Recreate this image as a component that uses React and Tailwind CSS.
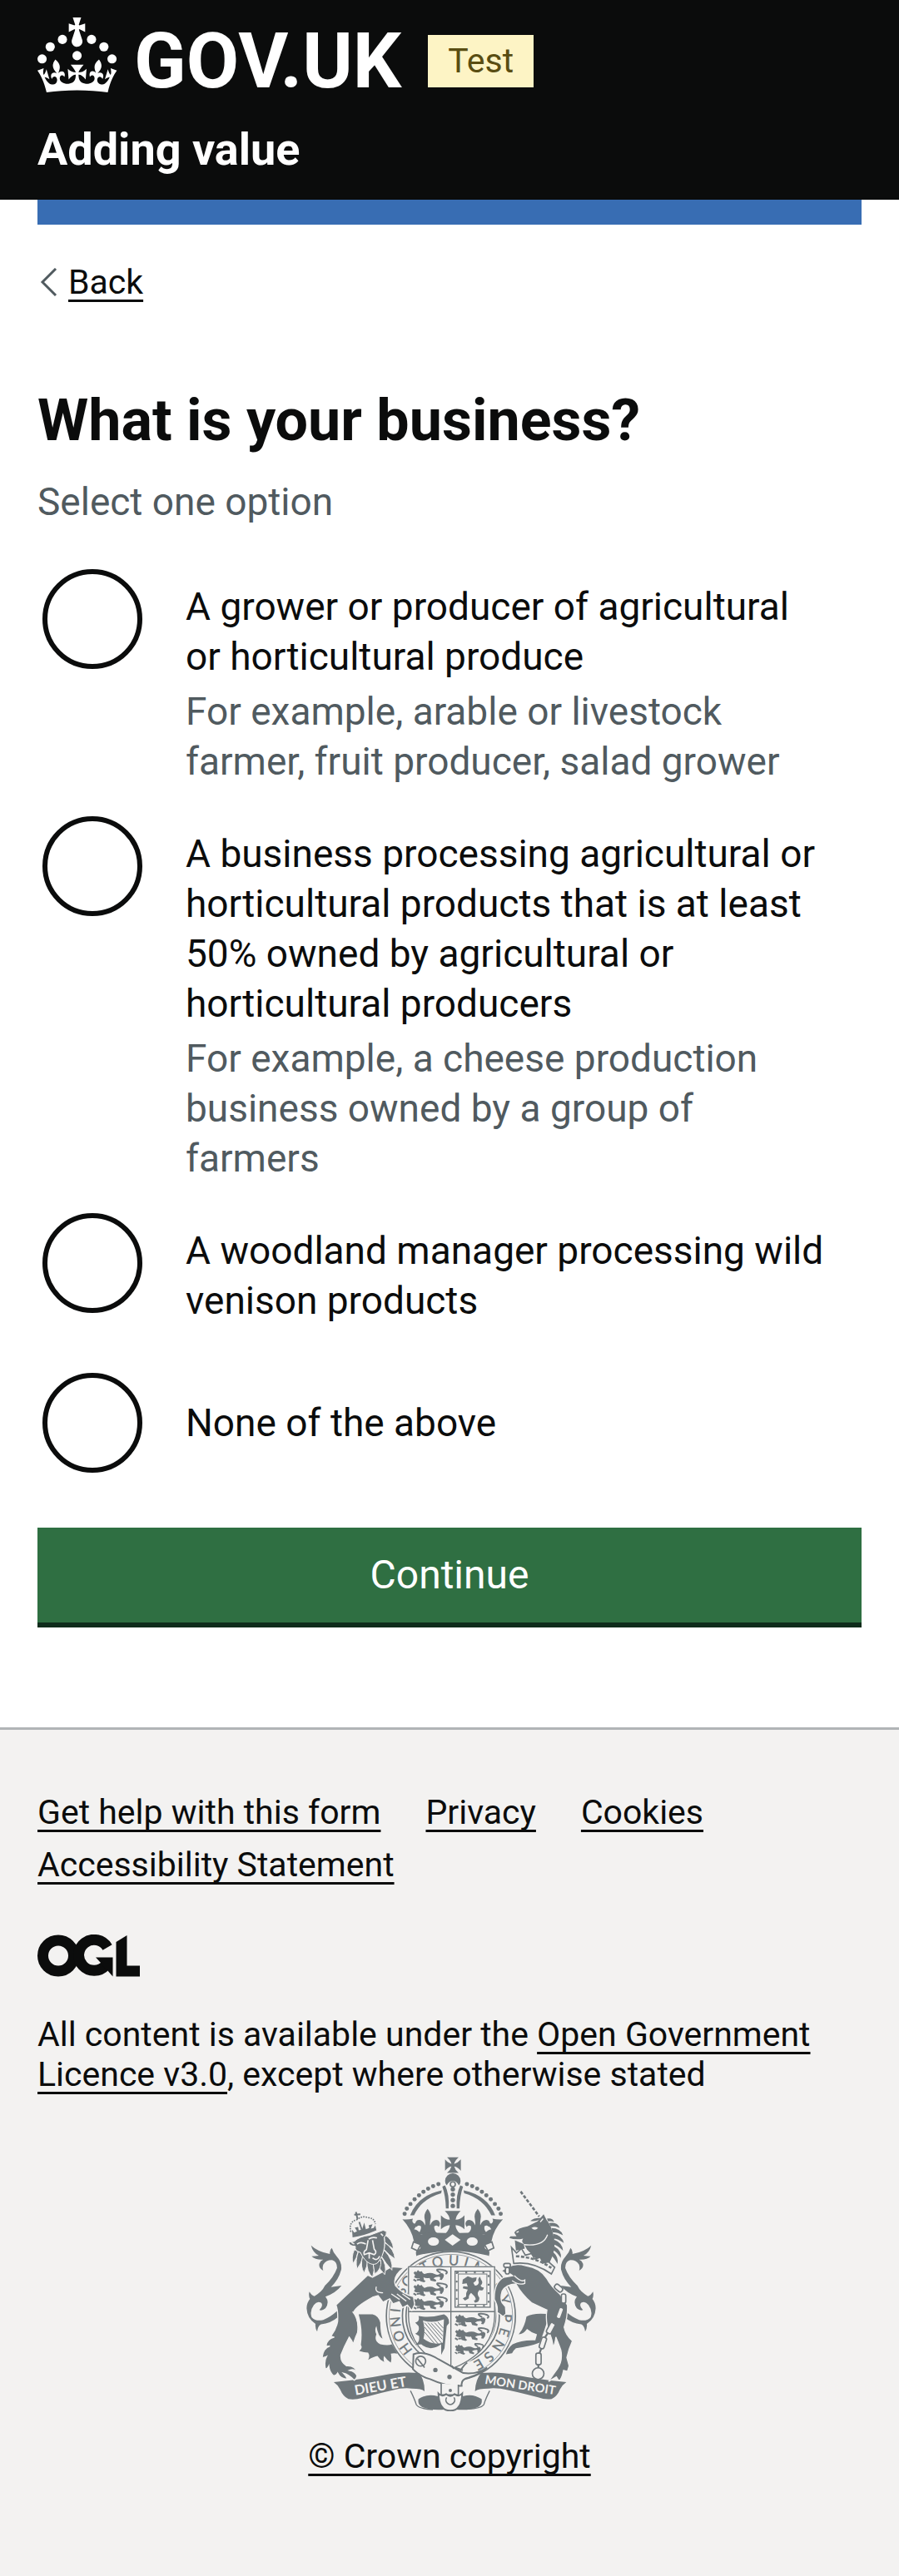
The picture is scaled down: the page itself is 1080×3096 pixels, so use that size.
const OPTIONS = [
  {
    id: "grower",
    label: "A grower or producer of agricultural or horticultural produce",
    hint: "For example, arable or livestock farmer, fruit producer, salad grower",
  },
  {
    id: "processor",
    label:
      "A business processing agricultural or horticultural products that is at least 50% owned by agricultural or horticultural producers",
    hint: "For example, a cheese production business owned by a group of farmers",
  },
  {
    id: "woodland",
    label: "A woodland manager processing wild venison products",
  },
  { id: "none", label: "None of the above" },
];

const FOOTER_LINKS = [
  "Get help with this form",
  "Privacy",
  "Cookies",
  "Accessibility Statement",
];

const LINK =
  "underline decoration-[3px] underline-offset-[7px] [text-decoration-skip-ink:none]";

function Crown() {
  return (
    <svg viewBox="0 0 64 60" className="h-[90px] w-24 shrink-0" fill="currentColor" aria-hidden="true">
      <circle cx="20" cy="17.6" r="3.7" />
      <circle cx="10.2" cy="23.5" r="3.7" />
      <circle cx="3.7" cy="33.2" r="3.7" />
      <circle cx="31.7" cy="30.6" r="3.7" />
      <circle cx="43.3" cy="17.6" r="3.7" />
      <circle cx="53.2" cy="23.5" r="3.7" />
      <circle cx="59.7" cy="33.2" r="3.7" />
      <path d="M33.1,9.8c.2-.1.3-.3.5-.5l4.6,2.4v-6.8l-4.6,1.5c-.1-.2-.3-.3-.5-.5l1.9-5.9h-6.7l1.9,5.9c-.2.1-.3.3-.5.5l-4.6-1.5v6.8l4.6-2.4c.1.2.3.3.5.5l-2.6,8c-.9,2.8,1.2,5.7,4.1,5.7h0c3,0,5.1-2.9,4.1-5.7l-2.6-8ZM37,37.9s-3.4,3.8-4.1,6.1c2.2,0,4.2-.5,6.4-2.8l-.7,8.5c-2-2.8-4.4-4.1-5.7-3.8.1,3.1.5,6.7,5.8,7.2,3.7.3,6.7-1.5,7-3.8.4-2.6-2-4.3-3.7-1.6-1.4-4.5,2.4-6.1,4.9-3.2-1.9-4.5-1.8-7.7,2.4-10.9,3,4,2.6,7.3-1.2,11.1,2.4-1.3,6.2,0,4,4.6-1.2-2.8-3.7-2.2-4.2.2-.3,1.7.7,3.7,3,4.2,1.9.3,4.7-.9,7-5.9-1.3,0-2.4.7-3.9,1.7l2.4-8c.6,2.3,1.4,3.7,2.2,4.5.6-1.6.5-2.8,0-5.3l5,1.8c-2.6,3.6-5.2,8.7-7.3,17.5-7.4-1.1-15.7-1.7-24.5-1.7h0c-8.8,0-17.1.6-24.5,1.7-2.1-8.9-4.7-13.9-7.3-17.5l5-1.8c-.5,2.5-.6,3.7,0,5.3.8-.8,1.6-2.3,2.2-4.5l2.4,8c-1.5-1-2.6-1.7-3.9-1.7,2.3,5,5.2,6.2,7,5.9,2.3-.4,3.3-2.4,3-4.2-.5-2.4-3-3.1-4.2-.2-2.2-4.6,1.6-6,4-4.6-3.7-3.7-4.2-7.1-1.2-11.1,4.2,3.2,4.3,6.4,2.4,10.9,2.5-2.8,6.3-1.3,4.9,3.2-1.8-2.7-4.1-1-3.7,1.6.3,2.3,3.3,4.1,7,3.8,5.4-.5,5.7-4.2,5.8-7.2-1.3-.2-3.7,1-5.7,3.8l-.7-8.5c2.2,2.3,4.2,2.7,6.4,2.8-.7-2.3-4.1-6.1-4.1-6.1h10.6,0Z" />
    </svg>
  );
}

/* Open Government Licence mark: two linked rings, an arrow and an angle. */
function LicenceMark() {
  return (
    <svg viewBox="0 0 123 51" className="h-[51px] w-[123px]" role="img" aria-label="Open Government Licence">
      <g fill="none" stroke="#0b0c0c" strokeWidth="13">
        <circle cx="25" cy="25.5" r="18.5" />
        <path d="M84 15.500A18.500 18.500 0 1 0 82 37" />
      </g>
      <path d="M70 27.500H90.500V50.500L84 43L77 37L76 34Z" fill="#0b0c0c" />
      <path d="M94.500 9L107.500 1V37.500H123V50.500H94.500Z" fill="#0b0c0c" />
    </svg>
  );
}

function PassantLion({ x, y, s = 1 }) {
  return (
    <g transform={`translate(${x} ${y}) scale(${s})`}>
      <path d="M2 10L8 4L12 8L18 0L24 6L32 4Q34 12 42 14Q64 6 78 14Q92 20 98 12Q108 8 112 18Q112 28 104 36L96 34Q102 26 94 24Q80 24 74 30L84 36L82 42L64 38L60 28Q46 30 38 26L40 36L46 40L40 44L26 40L24 30Q12 32 4 26L8 18Z" />
      <path
        d="M100 10Q84 2 88 -2Q104 -4 118 2Q128 8 118 14M14 36L30 34M2 34L12 40"
        fill="none"
        stroke="currentColor"
        strokeWidth="6"
      />
    </g>
  );
}

function Tail() {
  return (
    <path d="M40 385Q64 408 108 416Q106 402 115 394Q120 412 134 426Q152 445 149 472Q140 508 112 535L150 530Q130 556 92 570Q108 590 92 612Q80 622 70 618Q86 602 76 592Q62 584 50 600Q34 622 42 644Q56 660 84 654Q110 644 134 622L142 640Q110 668 76 670Q64 676 62 696Q54 684 56 668Q26 650 24 612Q24 592 36 578Q30 566 34 552Q42 566 52 568Q80 552 90 530Q122 500 134 466Q134 444 118 438Q96 436 84 454Q80 466 84 476Q66 466 70 450Q74 440 84 436Q56 438 42 424Q56 424 68 422Q46 410 40 385Z" />
  );
}

function Fleur({ x }) {
  return (
    <g transform={`translate(${x} 0)`}>
      <path d="M0 253Q16 272 10 292Q8 302 9 312Q20 288 38 294Q50 304 40 318Q34 308 24 316Q22 334 40 344L-38 344Q-22 334 -24 316Q-34 308 -40 318Q-50 304 -38 294Q-20 288 -9 312Q-8 302 -10 292Q-16 272 0 253Z" />
    </g>
  );
}

const ARCH_DOTS = [
  [378, 271],
  [386, 252],
  [399, 235],
  [414, 218],
  [430, 204],
  [446, 191],
  [463, 180],
  [481, 171],
  [500, 163],
];

/* Garter motto: each letter with its bearing round the ring, in degrees. */
const GARTER = [
  ["H", 234],
  ["O", 249],
  ["N", 264],
  ["I", 276],
  ["S", 297],
  ["O", 309],
  ["I", 320],
  ["T", 332],
  ["Q", 346],
  ["U", 3],
  ["I", 16],
  ["M", 31],
  ["A", 44],
  ["L", 57],
  ["Y", 73],
  ["P", 92],
  ["E", 107],
  ["N", 122],
  ["S", 137],
  ["E", 150],
];

const LION_MANE = [
  "M304 346Q334 360 338 398Q320 386 306 372Z",
  "M306 374Q342 400 343 434Q322 420 304 400Z",
  "M304 402Q338 436 332 474Q310 450 294 424Z",
  "M292 424Q316 456 306 490Q288 474 278 446Z",
  "M196 400Q184 430 192 450Q206 430 210 406Z",
  "M212 404Q198 440 206 470Q222 450 228 424Z",
  "M226 424Q216 462 232 484Q242 462 246 440Z",
  "M242 440Q240 480 262 500Q272 474 264 448Z",
  "M264 450L292 438Q296 470 270 488Z",
];

const UNICORN_MANE = [
  "M892 288Q912 284 918 300Q906 296 896 298Z",
  "M900 304Q930 298 938 322Q918 312 904 316Z",
  "M908 322Q940 322 950 348Q926 336 912 338Z",
  "M914 342Q946 348 953 376Q930 360 916 360Z",
  "M918 364Q948 376 950 404Q930 384 918 382Z",
  "M918 388Q946 404 942 430Q928 408 914 402Z",
  "M914 408Q936 428 930 452Q918 430 908 422Z",
];

function RoyalArms() {
  const bg = "#f3f2f1";
  return (
    <svg
      viewBox="12 64 1056 920"
      className="block h-[306px] w-[352px] text-[#6f777b]"
      fill="currentColor"
      aria-hidden="true"
    >
      {/* garter */}
      <g fill="none" stroke="currentColor" strokeWidth="5">
        <circle cx="545" cy="640" r="233" />
        <circle cx="545" cy="640" r="223" strokeWidth="2" />
        <circle cx="545" cy="640" r="175" />
        <circle cx="545" cy="640" r="162" />
      </g>
      <g fontFamily="Lato, sans-serif" fontSize="50" textAnchor="middle" stroke="currentColor" strokeWidth="1">
        {GARTER.map(([c, a]) => (
          <text key={a} x="545" y="456" transform={`rotate(${a} 545 640)`}>
            {c}
          </text>
        ))}
      </g>

      {/* crown */}
      <path d="M531 66H573Q558 80 557 90Q570 87 581 74V115Q570 101 557 99Q560 112 573 123H531Q544 112 547 99Q534 101 524 115V74Q534 87 547 90Q546 80 531 66Z" />
      <path d="M524 152A28 28 0 0 1 580 152Q580 162 574 168Q566 152 552 152Q538 152 530 168Q524 162 524 152Z" />
      <circle cx="552" cy="164" r="9" fill="none" stroke="currentColor" strokeWidth="5" />
      {[182, 201, 221, 242].map((y) => (
        <circle key={y} cx="552" cy={y} r="8" />
      ))}
      {["", "matrix(-1 0 0 1 1103 0)"].map((t) => (
        <g key={t} transform={t || undefined}>
          {ARCH_DOTS.map(([x, y]) => (
            <circle key={x} cx={x} cy={y} r="7.5" />
          ))}
          <path d="M398 276Q426 204 512 186L510 196Q440 216 412 276Z" />
          <path d="M514 172Q526 206 527 251H537Q540 200 524 168Z" />
          <path d="M370 290Q388 292 408 288Q402 300 412 306Q424 302 426 312Q418 316 412 326Q430 330 436 344L450 344V400Q436 402 421 424Q416 408 422 402Q440 398 438 384L412 372Q404 326 370 290Z" />
          <path d="M410 372L436 382L424 404L403 394Z" fill={bg} stroke="currentColor" strokeWidth="5" />
          <Fleur x={461} />
        </g>
      ))}
      <path d="M523 260H580Q564 276 562 292Q580 292 594 276V326Q580 312 562 311Q562 326 576 340L640 338Q668 340 680 370Q664 384 668 404L682 422Q551 388 421 422L434 404Q440 384 424 370Q436 340 462 338L527 340Q540 326 541 311Q524 312 509 326V276Q524 292 541 292Q540 276 523 260Z" />
      <g fill={bg}>
        <ellipse cx="482" cy="371" rx="20" ry="15" />
        <ellipse cx="622" cy="371" rx="20" ry="15" />
        <path d="M551 344L580 365L551 386L523 365Z" />
      </g>

      {/* shield */}
      <path
        d="M388 459H707V640Q704 776 545 838Q391 776 388 640Z"
        fill={bg}
      />
      <path
        d="M392 462H703V640Q700 772 545 832Q395 772 392 640ZM545 462V832M392 624H703"
        fill="none"
        stroke="currentColor"
        strokeWidth="4"
      />
      <PassantLion x={408} y={474} />
      <PassantLion x={408} y={524} />
      <PassantLion x={408} y={574} />
      <PassantLion x={558} y={634} />
      <PassantLion x={558} y={686} />
      <PassantLion x={558} y={742} s={0.85} />
      <g fill="none" stroke="currentColor">
        <rect x="560" y="478" width="127" height="130" strokeWidth="4" />
        <rect x="572" y="488" width="103" height="110" strokeWidth="3" />
        <rect x="566" y="483" width="115" height="120" strokeWidth="6" strokeDasharray="7 24" />
      </g>
      <path d="M588 508L606 496L622 502L638 500L636 512L626 520L632 530Q644 530 646 518Q640 506 650 498L654 508Q664 520 652 530Q658 540 664 536Q662 552 648 546Q636 560 648 574Q648 590 632 592L628 584Q640 582 630 568L618 556Q608 564 610 576L596 584L588 576L600 570Q598 556 606 544L588 540L590 532L606 534L602 522L586 524Z" />
      <path d="M428 640Q470 648 520 634Q540 644 538 666L530 676L522 756L510 780V742Q470 770 438 742L416 744Q434 734 430 712L416 704Q434 694 428 676L416 664Q434 660 428 640Z" />
      <path d="M444 656Q480 668 520 652L516 736Q480 748 446 722Q454 690 444 656Z" fill={bg} />
      <path
        d="M450 664L512 738M462 664L514 724M474 666L516 712M486 664L517 698M498 662L518 684M450 680L500 742M450 698L486 740"
        stroke="currentColor"
        strokeWidth="3"
      />

      {/* belt and buckle */}
      <path
        d="M410 778Q450 764 500 796Q546 822 590 846Q640 852 676 826Q650 850 610 862Q580 868 584 892Q530 896 470 868Q430 856 408 832Z"
        fill={bg}
        stroke="currentColor"
        strokeWidth="6"
      />
      <path d="M604 808Q590 818 578 840M560 826L588 836M556 830L548 820" fill="none" stroke="currentColor" strokeWidth="6" />
      <circle cx="436" cy="803" r="18" fill={bg} stroke="currentColor" strokeWidth="5" />
      <path d="M424 794L450 826" stroke="currentColor" strokeWidth="5" />
      <circle cx="489" cy="835" r="8" />
      <circle cx="540" cy="860" r="8" />

      {/* motto ribbons */}
      <path d="M122 879Q230 868 300 854Q370 840 430 846Q450 870 450 912Q440 902 404 902Q390 899 360 902Q296 916 224 936Q200 943 175 940Q155 930 145 905Q138 890 122 879Z" />
      <path d="M962 879Q854 868 784 854Q714 840 654 846Q634 870 632 912Q644 902 680 902Q694 899 724 902Q788 914 860 934Q884 943 909 940Q929 930 939 905Q946 890 962 879Z" />
      <g fill={bg} fontFamily="Lato, sans-serif" fontWeight="700">
        <text x="200" y="926" fontSize="50" transform="rotate(-10 200 926)">DIEU ET</text>
        <text x="666" y="884" fontSize="44" transform="rotate(9 666 884)">MON DROIT</text>
      </g>
      <path d="M428 940Q460 918 498 930Q506 960 522 978Q470 982 440 968Q424 958 428 940ZM656 940Q624 918 588 930Q580 960 564 978Q614 982 644 968Q660 958 656 940Z" />
      <path d="M399 910Q414 940 420 960Q430 976 480 978M685 910Q670 940 664 960Q654 974 604 976" fill="none" stroke="currentColor" strokeWidth="4" />
      <path d="M510 884V925H572V888" fill={bg} stroke="currentColor" strokeWidth="5" />
      <path d="M500 920Q512 934 528 922Q543 936 558 922Q574 934 586 920Q584 982 543 982Q502 982 500 920Z" fill={bg} stroke="currentColor" strokeWidth="6" />
      <path d="M530 934A16 16 0 1 0 556 934" fill="none" stroke="currentColor" strokeWidth="5" />
      <circle cx="543" cy="909" r="6" />

      {/* lion */}
      <Tail />
      <path d="M212 634H262Q284 640 290 664Q290 700 298 722Q282 714 276 676Q268 690 276 706Q266 730 290 742Q318 748 332 742L352 776Q340 772 328 776Q332 792 328 808Q314 800 304 784Q300 794 304 806Q288 798 280 784Q268 786 246 798Q254 784 246 772Q232 772 214 766Q228 756 220 744Q228 690 212 634Z" />
      <path
        d="M245 492L130 600Q138 620 136 660Q130 690 112 712Q116 716 124 716Q96 724 94 748Q100 750 108 748Q84 756 80 788Q84 792 96 786Q86 804 92 830Q98 832 104 820Q106 842 122 856Q132 854 136 846Q146 868 172 868Q166 856 156 846Q176 850 196 872Q204 868 206 856Q200 840 178 836Q196 828 206 844Q200 818 168 820Q145 805 148 780Q160 750 178 716Q190 730 192 742Q200 716 212 690Q210 650 194 626Q200 606 262 572L282 566L300 590L324 578L336 596L358 588L370 610L388 600L404 620L414 598L410 570Q370 560 345 530Q332 496 376 465L330 462Q300 480 262 500Z"
        stroke={bg}
        strokeWidth="4"
      />
      <path d="M276 534Q268 556 300 556M190 624Q214 650 208 700M330 560L360 580M350 560L384 586M370 560L398 580" fill="none" stroke={bg} strokeWidth="4" />
      {LION_MANE.map((d) => (
        <path key={d} d={d} stroke={bg} strokeWidth="3" />
      ))}
      <path
        d="M175 374L196 370Q214 352 252 348L300 330L312 334Q314 348 304 356Q310 390 296 424L282 446Q270 458 252 450Q232 440 218 410L204 404Q198 398 200 388Q180 388 175 374Z"
        stroke={bg}
        strokeWidth="3"
      />
      <path
        d="M206 380Q220 370 238 380M248 362Q262 352 278 358M246 366L240 400Q228 406 232 418L250 412L268 418Q280 410 268 398L262 366M250 412V432M262 430Q278 444 288 424M186 374L196 380M292 342L300 350"
        fill="none"
        stroke={bg}
        strokeWidth="5"
      />
      <path d="M190 356Q230 350 276 330L272 312L266 322L256 324L262 308L248 312L250 322L238 326L232 302L224 328L212 330L210 318L198 320L206 334L196 338L188 328Z" />
      <path d="M184 336Q174 300 205 292Q226 276 244 284Q270 286 272 308" fill="none" stroke="currentColor" strokeWidth="5" strokeDasharray="5 4" />
      <path d="M214 300L224 330M202 264L208 290M196 274L218 272" fill="none" stroke="currentColor" strokeWidth="6" />

      {/* unicorn */}
      <g transform="matrix(-1 0 0 1 1092 0)">
        <Tail />
      </g>
      <path d="M890 632Q840 628 818 642Q812 680 790 706Q808 704 820 686Q836 700 856 706L850 728Q800 726 768 742Q750 756 744 778L766 774Q772 762 780 756Q830 750 866 736Q884 690 892 660Z" />
      <path
        d="M752 462Q780 448 815 458Q868 466 892 505Q905 530 938 560L966 600Q968 640 954 680Q960 710 984 730Q970 760 964 790L972 820L966 840L952 836Q944 874 934 872L926 860L898 876Q915 850 930 830Q950 800 942 762Q930 730 924 716Q922 740 914 752Q912 724 900 700Q885 660 892 618Q860 604 836 592Q800 560 780 524Q744 526 730 550Q722 576 730 592L742 606L744 632L734 642L712 626Q716 604 702 580Q700 520 736 500L768 494Q750 480 738 484L728 476Z"
        stroke={bg}
        strokeWidth="4"
      />
      <path d="M774 494Q800 520 812 510V522Q790 530 766 512" fill="none" stroke={bg} strokeWidth="4" />
      <path d="M774 338Q786 322 822 316L858 298L880 272L890 292Q908 312 918 360Q925 400 902 446L884 452Q850 436 836 416L820 400L808 378Q798 372 806 360Q780 366 756 358L760 352L782 352Z" />
      <path d="M836 322Q848 314 860 322Q848 334 836 322Z" fill={bg} />
      <path d="M868 300L878 288M808 382Q880 390 894 346M782 338L790 334" fill="none" stroke={bg} strokeWidth="4" />
      <path d="M832 296Q846 284 872 286Q858 300 832 296ZM776 366L808 380L812 396L780 404Z" />
      {UNICORN_MANE.map((d) => (
        <path key={d} d={d} />
      ))}
      <path d="M797 190L864 280" fill="none" stroke="currentColor" strokeWidth="8" strokeDasharray="12 6" />
      <path
        d="M764 392L782 412L800 396L814 420L836 414L848 434L868 428L878 448L898 444L920 464L908 488Q840 440 772 450Z"
        fill={bg}
        stroke="currentColor"
        strokeWidth="5"
      />
      <path d="M780 424Q850 426 908 466" fill="none" stroke="currentColor" strokeWidth="8" strokeDasharray="12 6" />
      <g fill={bg} stroke="currentColor" strokeWidth="5">
        <rect x="736" y="450" width="24" height="14" rx="6" />
        <rect x="742" y="464" width="14" height="24" rx="6" />
        <rect x="918" y="530" width="32" height="18" rx="8" transform="rotate(40 934 539)" />
        <rect x="944" y="560" width="16" height="34" rx="7" />
        <rect x="930" y="608" width="17" height="42" rx="7" transform="rotate(20 938 630)" />
        <rect x="896" y="662" width="19" height="42" rx="7" transform="rotate(28 905 684)" />
        <rect x="868" y="716" width="18" height="42" rx="7" transform="rotate(18 877 738)" />
        <rect x="852" y="774" width="19" height="42" rx="7" />
        <circle cx="860" cy="848" r="21" />
      </g>
      <path d="M954 592L942 610M932 650L914 668M896 700L884 718M872 756L864 776M861 814V828" fill="none" stroke="currentColor" strokeWidth="7" />
    </svg>
  );
}

function Option({ id, label, hint }) {
  return (
    <div className="flex items-start gap-[52px] pl-1.5 pr-[45px]">
      <input
        type="radio"
        id={id}
        name="business"
        value={id}
        aria-describedby={hint ? `${id}-hint` : undefined}
        className="size-[120px] shrink-0 appearance-none rounded-full border-[6px] border-[#0b0c0c] bg-white checked:bg-[#0b0c0c] checked:shadow-[inset_0_0_0_24px_white]"
      />
      <div className="min-w-0">
        <label htmlFor={id} className="flex min-h-[120px] items-center py-[15px]">
          {label}
        </label>
        {hint && (
          <p id={`${id}-hint`} className="-mt-[9px] -mb-1.5 text-[#505a5f]">
            {hint}
          </p>
        )}
      </div>
    </div>
  );
}

export default function App() {
  return (
    <div className="min-h-screen bg-white font-[Roboto,sans-serif] text-[46px] leading-[60px] text-[#0b0c0c]">
      <header className="bg-[#0b0c0c] px-[45px] pb-[30px] pt-[21px] text-white">
        <div className="flex items-start">
          <a href="#home" className="flex h-[90px] items-start gap-5 text-[92px] font-bold leading-[90px]">
            <Crown />
            <span className="pt-2">GOV.UK</span>
          </a>
          <strong className="ml-8 mt-[21px] bg-[#fdf4c5] px-6 text-[41px] font-normal leading-[63px] text-[#594d12]">
            Test
          </strong>
        </div>
        <a href="#service" className="mt-[39px] block text-[54px] font-bold leading-[60px]">
          Adding value
        </a>
      </header>

      <div className="px-[45px]">
        <div className="h-[30px] bg-[#386db3]" />
        <a href="#back" className="mt-[45px] flex w-fit items-center text-[41px] leading-[48px]">
          <svg viewBox="0 0 37 34" className="h-[34px] w-[37px]" fill="none" stroke="#505a5f" strokeWidth="3" aria-hidden="true">
            <path d="M22 1L6 17L22 33" />
          </svg>
          <span className={LINK}>Back</span>
        </a>

        <main>
          <form onSubmit={(e) => e.preventDefault()}>
            <fieldset aria-describedby="business-hint" className="min-w-0">
              <legend className="pt-[105px]">
                <h1 className="text-[70px] font-bold leading-[75px]">What is your business?</h1>
              </legend>
              <p id="business-hint" className="mt-[30px] text-[#505a5f]">
                Select one option
              </p>
              <div className="mt-[51px] flex flex-col gap-[42px]">
                {OPTIONS.map((o) => (
                  <Option key={o.id} {...o} />
                ))}
              </div>
            </fieldset>
            <button
              type="submit"
              className="mt-[66px] h-[120px] w-full border-b-[6px] border-[#0f2c1b] bg-[#2f6f42] text-[48px] text-white"
            >
              Continue
            </button>
          </form>
        </main>
      </div>

      <footer className="mt-[120px] border-t-[3px] border-[#b1b4b6] bg-[#f3f2f1] px-[45px] pb-[120px] pt-[75px] text-[41px] leading-[48px]">
        <ul className="flex flex-wrap gap-x-[54px] gap-y-[15px]">
          {FOOTER_LINKS.map((text) => (
            <li key={text}>
              <a href="#footer" className={LINK}>
                {text}
              </a>
            </li>
          ))}
        </ul>
        <div className="mt-[60px]">
          <LicenceMark />
        </div>
        <p className="mt-[45px]">
          All content is available under the{" "}
          <a href="#licence" className={LINK}>
            Open Government Licence v3.0
          </a>
          , except where otherwise stated
        </p>
        <a href="#copyright" className="mx-auto mt-[75px] flex w-fit flex-col items-center gap-[30px]">
          <RoyalArms />
          <span className={LINK}>© Crown copyright</span>
        </a>
      </footer>
    </div>
  );
}
